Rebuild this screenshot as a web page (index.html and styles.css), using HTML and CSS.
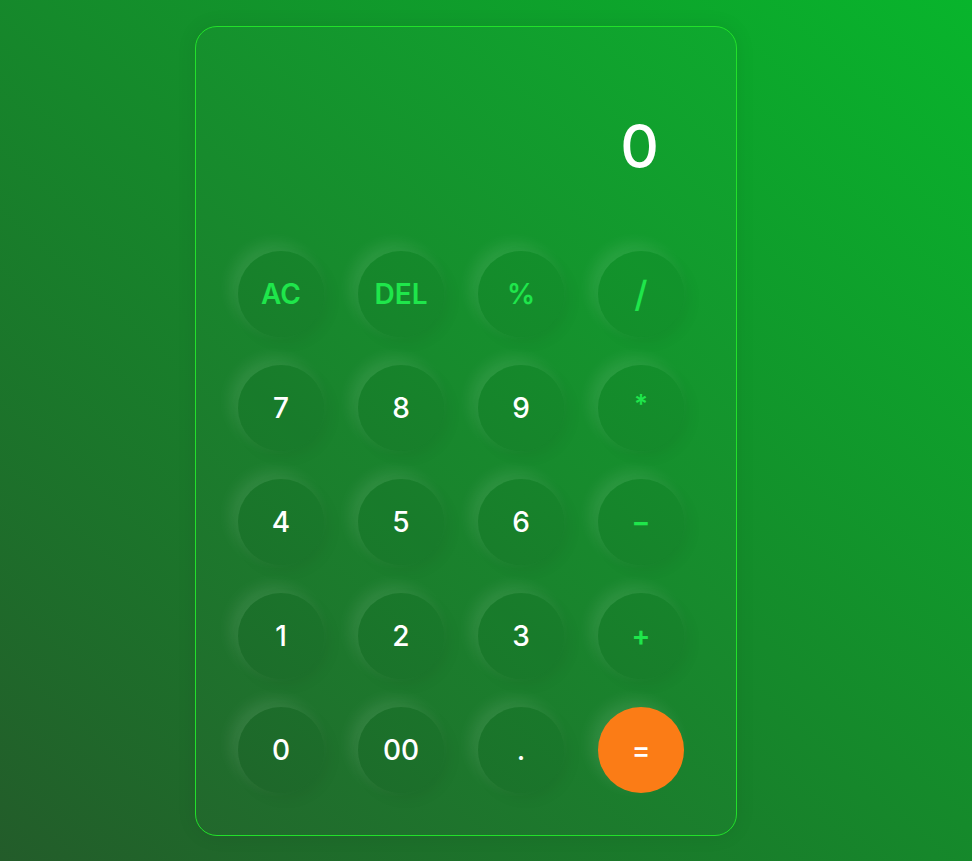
FILE: index.html
```html
<!DOCTYPE html>
<html lang="en">
<head>
<meta charset="utf-8">
<title>Calculator</title>
<link rel="stylesheet" href="styles.css">
</head>
<body>
<div class="page">
  <div class="calculator">
    <div class="display">0</div>
    <div class="keys">
      <button class="key op">AC</button>
      <button class="key op">DEL</button>
      <button class="key op">%</button>
      <button class="key op slash">/</button>
      <button class="key">7</button>
      <button class="key">8</button>
      <button class="key">9</button>
      <button class="key op star">*</button>
      <button class="key">4</button>
      <button class="key">5</button>
      <button class="key">6</button>
      <button class="key op">&minus;</button>
      <button class="key">1</button>
      <button class="key">2</button>
      <button class="key">3</button>
      <button class="key op">+</button>
      <button class="key">0</button>
      <button class="key">00</button>
      <button class="key">.</button>
      <button class="key equal">=</button>
    </div>
  </div>
</div>
</body>
</html>
```
FILE: styles.css
```css
* { box-sizing: border-box; }
html, body { margin: 0; height: 100%; }
body {
  background: linear-gradient(to top right, #235c2a 0%, #08b52c 100%);
  font-family: "Inter", "Noto Sans", sans-serif;
  overflow: hidden;
}
.page {
  padding: 26px 0 0 195px;
}
.calculator {
  width: 542px;
  height: 810px;
  border: 1px solid #22e02a;
  border-radius: 22px;
  background: rgba(255, 255, 255, 0.01);
  box-shadow: 0 0 20px rgba(0, 0, 0, 0.08);
  padding: 0 52px 0 42px;
}
.display {
  height: 224px;
  display: flex;
  align-items: center;
  justify-content: flex-end;
  padding: 13px 25px 0 0;
  color: #fff;
  font-size: 60px;
  font-weight: 500;
  line-height: 1;
}
.keys {
  display: grid;
  grid-template-columns: repeat(4, 86px);
  column-gap: 34px;
  row-gap: 28px;
}
.key {
  width: 86px;
  height: 86px;
  border: none;
  border-radius: 50%;
  background: rgba(0, 0, 0, 0.04);
  box-shadow: -7px -7px 16px rgba(255, 255, 255, 0.1), 5px 5px 15px rgba(0, 0, 0, 0.06);
  color: #fff;
  font-family: inherit;
  font-size: 28px;
  font-weight: 500;
  display: flex;
  align-items: center;
  justify-content: center;
  padding: 0;
}
.op { color: #1fe64b; font-weight: 600; }
.slash { font-size: 36px; font-weight: 500; }
.star { font-size: 26px; padding-bottom: 10px; }
.equal {
  background: #fb7c16;
  color: #fff;
  box-shadow: -7px -7px 16px rgba(255, 255, 255, 0.1);
}
```
